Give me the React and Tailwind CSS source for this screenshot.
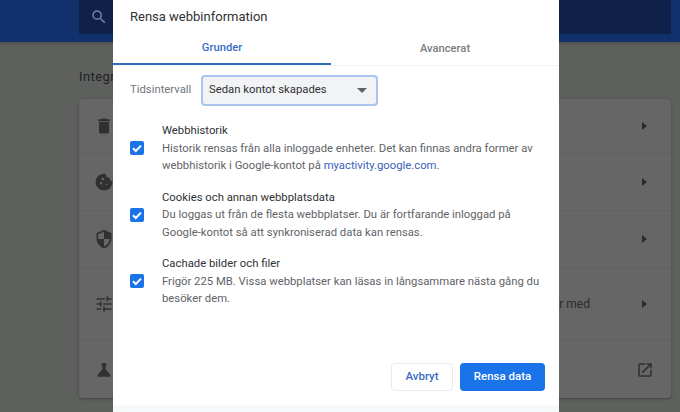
const rows = [
  { h: 'h-[55px]', icon: 'trash', right: 'arrow' },
  { h: 'h-[57px]', icon: 'cookie', right: 'arrow' },
  { h: 'h-[57px]', icon: 'shield', right: 'arrow' },
  { h: 'h-[73px]', icon: 'tune', right: 'arrow', text: 'er med' },
  { h: 'h-[57px]', icon: 'flask', right: 'open' },
]

function RowIcon({ name }) {
  const paths = {
    trash: 'M6 19c0 1.1.9 2 2 2h8c1.1 0 2-.9 2-2V7H6v12zM19 4h-3.5l-1-1h-5l-1 1H5v2h14V4z',
    cookie: 'M21.95 10.99c-1.79-.03-3.7-1.95-2.68-4.22-2.97 1-5.78-1.59-5.19-4.56C7.11.74 2 6.41 2 12c0 5.52 4.48 10 10 10 5.89 0 10.54-5.08 9.95-11.01zM8.5 15c-.83 0-1.5-.67-1.5-1.5S7.67 12 8.5 12s1.5.67 1.5 1.5S9.33 15 8.5 15zm2-5C9.67 10 9 9.33 9 8.5S9.67 7 10.5 7s1.5.67 1.5 1.5-.67 1.5-1.5 1.5zm4.5 6c-.55 0-1-.45-1-1s.45-1 1-1 1 .45 1 1-.45 1-1 1z',
    shield: 'M12 1 3 5v6c0 5.55 3.84 10.74 9 12 5.16-1.26 9-6.45 9-12V5l-9-4zm0 10.99h7c-.53 4.12-3.28 7.79-7 8.94V12H5V6.3l7-3.11v8.8z',
    tune: 'M3 17v2h6v-2H3zM3 5v2h10V5H3zm10 16v-2h8v-2h-8v-2h-2v6h2zM7 9v2H3v2h4v2h2V9H7zm14 4v-2H11v2h10zm-6-4h2V7h4V5h-4V3h-2v6z',
    flask: 'M19.8 18.4 14 10.67V6.5l1.35-1.69c.26-.33.03-.81-.39-.81H9.04c-.42 0-.65.48-.39.81L10 6.5v4.17L4.2 18.4c-.49.66-.02 1.6.8 1.6h14c.82 0 1.29-.94.8-1.6z',
  }
  return (
    <svg viewBox="0 0 24 24" className="w-[20px] h-[20px] fill-[#2f3030]">
      <path d={paths[name]} />
    </svg>
  )
}

function Row({ row, last }) {
  return (
    <div className={`${row.h} flex items-center pl-[15px] pr-[19px] ${last ? '' : 'border-b border-[#5f605f]'}`}>
      <RowIcon name={row.icon} />
      <div className="flex-1 text-right pr-[52px] text-[12px] text-[#2a2b2b]">{row.text}</div>
      {row.right === 'arrow' ? (
        <span className="w-0 h-0 mr-[5px] border-y-[4px] border-y-transparent border-l-[5px] border-l-[#2a2b2b]" />
      ) : (
        <svg viewBox="0 0 24 24" className="w-[18px] h-[18px] -mr-[2px] fill-[#2f3030]">
          <path d="M19 19H5V5h7V3H5a2 2 0 0 0-2 2v14a2 2 0 0 0 2 2h14c1.1 0 2-.9 2-2v-7h-2v7zM14 3v2h3.59l-9.83 9.83 1.41 1.41L19 6.41V10h2V3h-7z" />
        </svg>
      )}
    </div>
  )
}

function Option({ title, lines, className }) {
  return (
    <div className={`flex items-center ${className}`}>
      <span className="w-[14px] h-[14px] rounded-[2px] bg-[#1a73e8] flex items-center justify-center shrink-0">
        <svg viewBox="0 0 14 14" className="w-[14px] h-[14px] fill-none stroke-white stroke-[2]">
          <path d="M3 7.2 5.8 10 11 4.6" />
        </svg>
      </span>
      <div className="ml-[18px]">
        <div className="text-[11.3px] leading-[17.5px] text-[#303134]">{title}</div>
        <div className="text-[11.3px] leading-[17.5px] text-[#5f6368]">{lines}</div>
      </div>
    </div>
  )
}

export default function App() {
  return (
    <div className="relative w-[680px] h-[412px] overflow-hidden bg-[#5e605e] font-['Roboto',sans-serif]">
      <div className="h-[42px] bg-[#12306b] pl-[79px] pr-[9px] shadow-[0_1px_3px_rgba(0,0,0,0.25)]">
        <div className="h-[34px] bg-[#0f2149] flex items-center pl-[11px]">
          <svg viewBox="0 0 24 24" className="w-[18px] h-[18px] fill-[#76809a]">
            <path d="M15.5 14h-.79l-.28-.27A6.47 6.47 0 0 0 16 9.5 6.5 6.5 0 1 0 9.5 16c1.61 0 3.09-.59 4.23-1.57l.27.28v.79l5 4.99L20.49 19l-4.99-5zm-6 0C7.01 14 5 11.99 5 9.5S7.01 5 9.5 5 14 7.01 14 9.5 11.99 14 9.5 14z" />
          </svg>
        </div>
      </div>

      <div className="pl-[79px] pr-[9px]">
        <div className="pt-[27px] h-[57px] text-[13px] leading-[16px] tracking-[0.4px] text-[#202122]">Integritet</div>
        <div className="rounded-[4px] bg-[#656665] shadow-[0_1px_3px_rgba(0,0,0,0.3)]">
          {rows.map((row, i) => (
            <Row key={row.icon} row={row} last={i === rows.length - 1} />
          ))}
        </div>
      </div>

      <div className="absolute left-[113px] top-0 w-[446px] h-[412px] bg-white flex flex-col">
        <div className="pl-[17px] pt-[8px] h-[33px] text-[13px] leading-[18px] text-[#303134]">Rensa webbinformation</div>
        <div className="flex h-[33px] border-b border-[#f1f3f4] text-[11.2px] font-medium">
          <div className="w-[218px] h-[32px] flex items-center justify-center text-[#3b6cc4] border-b-2 border-[#2f6cc0]">Grunder</div>
          <div className="flex-1 h-[32px] flex items-center justify-center text-[#7a7d81]">Avancerat</div>
        </div>

        <div className="flex items-center pl-[17px] mt-[9px]">
          <span className="text-[11.3px] text-[#70757a] w-[71px]">Tidsintervall</span>
          <div className="w-[177px] h-[31px] rounded-[4px] bg-[#f1f3f4] border-2 border-[#a9c4ef] flex items-center justify-between pl-[6px] pr-[9px] text-[11.3px] text-[#303134]">
            Sedan kontot skapades
            <span className="w-0 h-0 border-x-[5px] border-x-transparent border-t-[5px] border-t-[#5f6368]" />
          </div>
        </div>

        <div className="pl-[17px] pr-[14px] mt-[16px]">
          <Option
            title="Webbhistorik"
            lines={<>Historik rensas från alla inloggade enheter. Det kan finnas andra former av<br />webbhistorik i Google-kontot på <span className="text-[#3c5fb8]">myactivity.google.com</span>.</>}
          />
          <Option
            className="mt-[14px]"
            title="Cookies och annan webbplatsdata"
            lines={<>Du loggas ut från de flesta webbplatser. Du är fortfarande inloggad på<br />Google-kontot så att synkroniserad data kan rensas.</>}
          />
          <Option
            className="mt-[14px]"
            title="Cachade bilder och filer"
            lines={<>Frigör 225 MB. Vissa webbplatser kan läsas in långsammare nästa gång du<br />besöker dem.</>}
          />
        </div>

        <div className="mt-auto flex justify-end gap-[7px] pr-[14px] pb-[14px]">
          <button className="w-[62px] h-[28px] rounded-[4px] border border-[#e8eaed] bg-white text-[11.5px] font-medium text-[#3b6cc4]">Avbryt</button>
          <button className="w-[85px] h-[28px] rounded-[4px] bg-[#1a73e8] text-[11.5px] font-medium text-white">Rensa data</button>
        </div>
        <div className="h-[7px] bg-[#f8f9fa]" />
      </div>
    </div>
  )
}
